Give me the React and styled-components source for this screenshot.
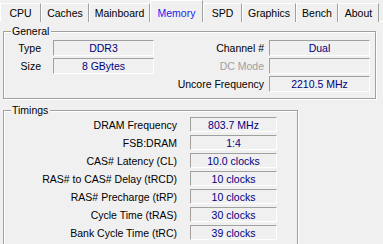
import React from "react";
import styled, { createGlobalStyle } from "styled-components";

const GlobalStyle = createGlobalStyle`
  html, body {
    margin: 0;
    padding: 0;
    background: #f0f0f0;
  }
  body {
    font-family: "Liberation Sans", Arial, sans-serif;
    font-size: 10.5px;
    color: #000;
  }
`;

const tabs = [
  { name: "CPU", w: 41 },
  { name: "Caches", w: 48 },
  { name: "Mainboard", w: 61 },
  { name: "Memory", w: 53, active: true },
  { name: "SPD", w: 39 },
  { name: "Graphics", w: 54 },
  { name: "Bench", w: 42 },
  { name: "About", w: 41 },
];

const timings = [
  ["DRAM Frequency", "803.7 MHz"],
  ["FSB:DRAM", "1:4"],
  ["CAS# Latency (CL)", "10.0 clocks"],
  ["RAS# to CAS# Delay (tRCD)", "10 clocks"],
  ["RAS# Precharge (tRP)", "10 clocks"],
  ["Cycle Time (tRAS)", "30 clocks"],
  ["Bank Cycle Time (tRC)", "39 clocks"],
];

const App = () => {
  return (
    <Window>
      <GlobalStyle />
      <TabStrip>
        {tabs.map((t) => (
          <Tab key={t.name} $w={t.w} $active={t.active}>
            {t.name}
          </Tab>
        ))}
      </TabStrip>
      <Panel>
        <Group $w={373} $h={68}>
          <Legend>General</Legend>
          <GeneralGrid>
            <Label>Type</Label>
            <Value>DDR3</Value>
            <Label $pad={5}>Channel #</Label>
            <Value>Dual</Value>

            <Label>Size</Label>
            <Value>8 GBytes</Value>
            <Label $pad={5} $disabled>DC Mode</Label>
            <Value />

            <Spacer />
            <Label $pad={5}>Uncore Frequency</Label>
            <Value>2210.5 MHz</Value>
          </GeneralGrid>
        </Group>
        <Group $w={295} $h={150} $top={11}>
          <Legend>Timings</Legend>
          <TimingsGrid>
            {timings.map(([label, value]) => (
              <React.Fragment key={label}>
                <Label $pad={13}>{label}</Label>
                <Value>{value}</Value>
              </React.Fragment>
            ))}
          </TimingsGrid>
        </Group>
      </Panel>
    </Window>
  );
};

const Window = styled.div`
  width: 383px;
  height: 244px;
  overflow: hidden;
  background: #f0f0f0;
`;

const TabStrip = styled.div`
  display: flex;
  align-items: flex-end;
  height: 22px;
  box-shadow: inset 0 -1px 0 #ffffff;
`;

const Tab = styled.div`
  box-sizing: border-box;
  width: ${(p) => p.$w}px;
  height: ${(p) => (p.$active ? 22 : 19)}px;
  padding-top: ${(p) => (p.$active ? 2 : 0)}px;
  display: flex;
  align-items: center;
  justify-content: center;
  border-top: 1px solid #ffffff;
  border-left: 1px solid #ffffff;
  border-right: 1px solid #a0a0a0;
  background: #f0f0f0;
  color: ${(p) => (p.$active ? "#2222ee" : "#000")};
  position: relative;
  z-index: ${(p) => (p.$active ? 1 : 0)};
  white-space: nowrap;
`;

const Panel = styled.div`
  padding: 9px 0 0 3px;
`;

const Group = styled.div`
  position: relative;
  box-sizing: border-box;
  width: ${(p) => p.$w}px;
  height: ${(p) => p.$h}px;
  margin-top: ${(p) => p.$top || 0}px;
  border: 1px solid #a0a0a0;
  box-shadow: 1px 1px 0 #ffffff, inset 1px 1px 0 #ffffff;
`;

const Legend = styled.span`
  position: absolute;
  top: -7px;
  left: 7px;
  padding: 0 2px 0 1px;
  line-height: 13px;
  background: #f0f0f0;
`;

const GeneralGrid = styled.div`
  display: grid;
  grid-template-columns: 49px 101px 1fr 101px;
  grid-auto-rows: 16px;
  row-gap: 2px;
  padding: 8px 5px 0 0;
`;

const TimingsGrid = styled.div`
  display: grid;
  grid-template-columns: 186px 87px;
  grid-auto-rows: 15px;
  row-gap: 3px;
  padding: 6px 0 0 0;
`;

const Spacer = styled.div`
  grid-column: 1 / 3;
`;

const Label = styled.div`
  display: flex;
  align-items: center;
  justify-content: flex-end;
  padding-right: ${(p) => (p.$pad != null ? p.$pad : 12)}px;
  color: ${(p) => (p.$disabled ? "#a0a0a0" : "#000")};
  white-space: nowrap;
`;

const Value = styled.div`
  box-sizing: border-box;
  display: flex;
  align-items: center;
  justify-content: center;
  border-top: 1px solid #a0a0a0;
  border-left: 1px solid #a0a0a0;
  border-bottom: 1px solid #ffffff;
  border-right: 1px solid #ffffff;
  color: #000080;
  white-space: nowrap;
`;

export default App;
